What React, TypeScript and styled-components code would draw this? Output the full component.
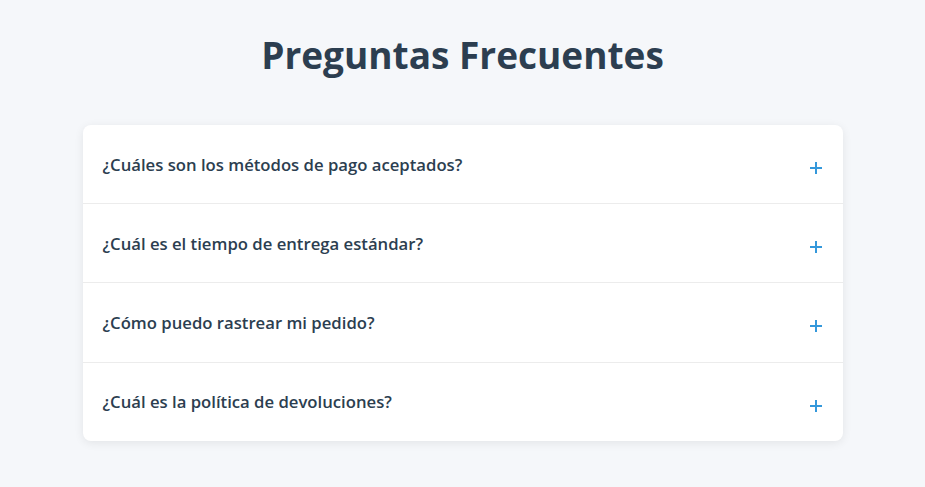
import React from "react";
import styled, { createGlobalStyle } from "styled-components";

const Global = createGlobalStyle`
  html, body { margin: 0; padding: 0; background: #f5f7fa; }
  body { font-family: "Open Sans", "Noto Sans", sans-serif; color: #2c3e50; }
`;

const Page = styled.div`
  max-width: 760px;
  margin: 0 auto;
  padding: 31px 20px 20px;
`;

const Title = styled.h1`
  margin: 0 0 46px;
  text-align: center;
  font-size: 37px;
  line-height: 48px;
  font-weight: 700;
  color: #2c3e50;
`;

const Card = styled.div`
  background: #fff;
  border-radius: 8px;
  box-shadow: 0 2px 10px rgba(0, 0, 0, 0.08);
  overflow: hidden;
`;

const Item = styled.div`
  border-bottom: 1px solid #ececec;
  &:last-child { border-bottom: none; }
`;

const Question = styled.div`
  display: flex;
  align-items: center;
  justify-content: space-between;
  padding: 25px 20px;
  height: 28.2px;
`;

const QText = styled.span`
  font-size: 16.7px;
  font-weight: 600;
  color: #2c3e50;
`;

const Plus = styled.svg`
  width: 14px;
  height: 14px;
  flex: none;
  margin-top: 8px;
`;

const questions = [
  "¿Cuáles son los métodos de pago aceptados?",
  "¿Cuál es el tiempo de entrega estándar?",
  "¿Cómo puedo rastrear mi pedido?",
  "¿Cuál es la política de devoluciones?",
];

export default function App() {
  return (
    <>
      <Global />
      <Page>
        <Title>Preguntas Frecuentes</Title>
        <Card>
          {questions.map((q) => (
            <Item key={q}>
              <Question>
                <QText>{q}</QText>
                <Plus viewBox="0 0 14 14">
                  <path d="M7 1v12M1 7h12" stroke="#3498db" strokeWidth="2" />
                </Plus>
              </Question>
            </Item>
          ))}
        </Card>
      </Page>
    </>
  );
}
